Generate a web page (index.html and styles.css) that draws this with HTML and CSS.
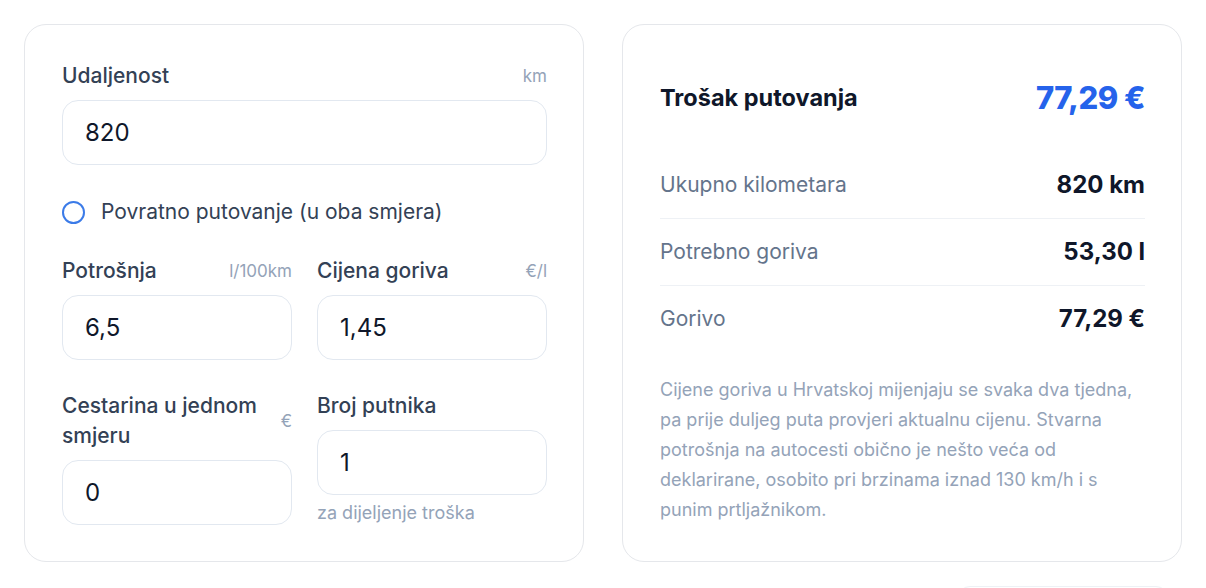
FILE: index.html
```html
<!DOCTYPE html>
<html lang="hr">
<head>
    <meta charset="UTF-8">
    <meta name="viewport" content="width=device-width, initial-scale=1.0">
    <title>Trošak putovanja</title>
    <link rel="stylesheet" href="styles.css">
</head>
<body>
<div class="page">
    <div class="grid">
        <div class="card form-card">
            <div class="field">
                <div class="field-label">
                    <label for="distance">Udaljenost</label>
                    <span class="unit">km</span>
                </div>
                <input id="distance" class="input" type="text" value="820">
            </div>

            <label class="radio-row">
                <span class="radio"></span>
                Povratno putovanje (u oba smjera)
            </label>

            <div class="row">
                <div class="field">
                    <div class="field-label">
                        <label for="consumption">Potrošnja</label>
                        <span class="unit">l/100km</span>
                    </div>
                    <input id="consumption" class="input" type="text" value="6,5">
                </div>
                <div class="field">
                    <div class="field-label">
                        <label for="price">Cijena goriva</label>
                        <span class="unit">€/l</span>
                    </div>
                    <input id="price" class="input" type="text" value="1,45">
                </div>
            </div>

            <div class="row row-last">
                <div class="field">
                    <div class="field-label">
                        <label for="toll">Cestarina u jednom smjeru</label>
                        <span class="unit">€</span>
                    </div>
                    <input id="toll" class="input" type="text" value="0">
                </div>
                <div class="field">
                    <div class="field-label">
                        <label for="passengers">Broj putnika</label>
                    </div>
                    <input id="passengers" class="input" type="text" value="1">
                    <div class="hint">za dijeljenje troška</div>
                </div>
            </div>
        </div>

        <div class="card result-card">
            <div class="result-header">
                <h2>Trošak putovanja</h2>
                <span class="total">77,29 €</span>
            </div>
            <div class="result-row">
                <span>Ukupno kilometara</span>
                <strong>820 km</strong>
            </div>
            <div class="result-row">
                <span>Potrebno goriva</span>
                <strong>53,30 l</strong>
            </div>
            <div class="result-row">
                <span>Gorivo</span>
                <strong>77,29 €</strong>
            </div>
            <p class="note">
                Cijene goriva u Hrvatskoj mijenjaju se svaka dva tjedna, pa prije duljeg puta provjeri aktualnu cijenu. Stvarna potrošnja na autocesti obično je nešto veća od deklarirane, osobito pri brzinama iznad 130 km/h i s punim prtljažnikom.
            </p>
        </div>
    </div>

    <div class="actions">
        <div class="actions-bar"></div>
    </div>
</div>
</body>
</html>
```

FILE: styles.css
```css
* {
    box-sizing: border-box;
}
body {
    margin: 0;
    background-color: #fff;
    font-family: Inter, "Noto Sans", sans-serif;
    color: #0f172a;
}
.page {
    padding: 24px;
}
.grid {
    display: grid;
    grid-template-columns: 1fr 1fr;
    gap: 38px;
}
.card {
    background-color: #fff;
    border: 1px solid #e5e7eb;
    border-radius: 22px;
    padding: 36px 36px 36px 37px;
}
.field {
    display: flex;
    flex-direction: column;
}
.field-label {
    display: flex;
    align-items: center;
    justify-content: space-between;
    gap: 12px;
    margin-bottom: 9px;
}
.field-label label {
    font-size: 21px;
    line-height: 30px;
    font-weight: 500;
    color: #334155;
}
.unit {
    font-size: 17px;
    color: #94a3b8;
    white-space: nowrap;
}
.input {
    width: 100%;
    height: 65px;
    padding: 0 22px;
    border: 1px solid #e2e8f0;
    border-radius: 16px;
    font-family: inherit;
    font-size: 24px;
    color: #0f172a;
    background-color: #fff;
    outline: none;
}
.radio-row {
    display: flex;
    align-items: center;
    gap: 16px;
    margin: 32px 0 29px;
    font-size: 21px;
    line-height: 30px;
    color: #334155;
}
.radio {
    width: 23px;
    height: 23px;
    border: 2px solid #3b7be8;
    border-radius: 50%;
}
.row {
    display: grid;
    grid-template-columns: 1fr 1fr;
    gap: 25px;
    align-items: start;
    margin-bottom: 31px;
}
.row-last {
    margin-bottom: 0;
}
.hint {
    margin-top: 6px;
    font-size: 18px;
    line-height: 24px;
    color: #94a3b8;
}
.result-header {
    display: flex;
    align-items: center;
    justify-content: space-between;
    height: 40px;
    margin: 16px 0 35px;
}
.result-header h2 {
    margin: 0;
    font-size: 23.5px;
    font-weight: 700;
    color: #0f172a;
}
.total {
    font-size: 31px;
    font-weight: 800;
    color: #2563eb;
    letter-spacing: -0.5px;
}
.result-row {
    display: flex;
    align-items: center;
    justify-content: space-between;
    padding: 18px 0;
    line-height: 30px;
    border-bottom: 1px solid #eef1f5;
    font-size: 21px;
    color: #64748b;
}
.result-row:last-of-type {
    border-bottom: none;
}
.result-row strong {
    font-size: 24px;
    font-weight: 700;
    color: #0f172a;
}
.note {
    margin: 23px 0 0;
    font-size: 18px;
    line-height: 30px;
    color: #94a3b8;
}
.actions {
    display: flex;
    justify-content: flex-end;
    margin-top: 24px;
    padding-right: 14px;
}
.actions-bar {
    width: 210px;
    height: 48px;
    border: 1px solid #eef1f5;
    border-radius: 12px;
}
```
